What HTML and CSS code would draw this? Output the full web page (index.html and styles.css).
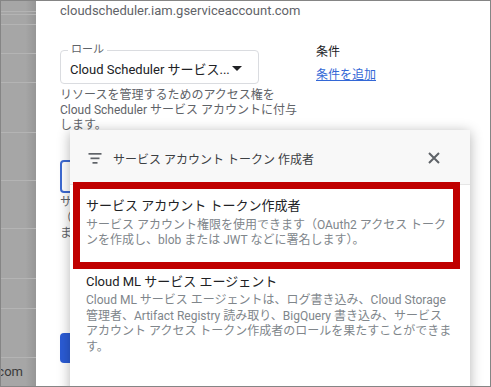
FILE: index.html
```html
<!DOCTYPE html>
<html lang="ja">
<head>
    <meta charset="UTF-8">
    <meta name="viewport" content="width=device-width, initial-scale=1.0">
    <title>ロールを選択</title>
    <link rel="stylesheet" href="styles.css">
</head>
<body>

<div id="frame">
    <!-- dimmed page behind the side panel -->
    <div class="backdrop">
        <div class="row" style="height: 10px;"></div>
        <div class="row" style="height: 2px;"></div>
        <div class="row" style="height: 9px;"></div>
        <div class="row" style="height: 28px;"></div>
        <div class="row" style="height: 28px;"></div>
        <div class="row" style="height: 49px;"></div>
        <div class="row" style="height: 47px;"></div>
        <div class="row" style="height: 47px;"></div>
        <div class="row" style="height: 49px;"></div>
        <div class="row" style="height: 29px;"></div>
        <div class="row" style="height: 48px;"></div>
        <div class="row last"><span>gserviceaccount.com</span></div>
    </div>

    <div class="panel">
        <div class="account">cloudscheduler.iam.gserviceaccount.com</div>

        <div class="role-row">
            <div class="role-col">
                <div class="select-box">
                    <span class="select-label">ロール</span>
                    <span class="select-value">Cloud Scheduler サービス...</span>
                    <svg class="arrow" width="10" height="5" viewBox="0 0 10 5"><path d="M0 0h10L5 5z" fill="#202124"/></svg>
                </div>
                <p class="help">リソースを管理するためのアクセス権を<br>Cloud Scheduler サービス アカウントに付与<br>します。</p>
            </div>
            <div class="cond-col">
                <div class="cond-title">条件</div>
                <a class="cond-link" href="#">条件を追加</a>
            </div>
        </div>

        <div class="outline-btn">別のロールを追加</div>
        <div class="hidden-wrap">
            <p class="hidden-text">サービス アカウントのユーザー ロール<br>（省略可）<br>ます。</p>
        </div>
        <div class="fill-btn">保存</div>

        <!-- role picker menu -->
        <div class="menu">
            <div class="menu-head">
                <svg class="filter-icon" width="14" height="11" viewBox="0 0 14 11">
                    <rect x="0.5" y="0" width="13" height="1.7" fill="#5f6368"/>
                    <rect x="2.5" y="4.5" width="9" height="1.7" fill="#5f6368"/>
                    <rect x="4.5" y="9" width="5" height="1.7" fill="#5f6368"/>
                </svg>
                <span class="menu-query">サービス アカウント トークン 作成者</span>
                <svg class="close-icon" width="12" height="12" viewBox="0 0 12 12">
                    <path d="M1 1L11 11M11 1L1 11" stroke="#5f6368" stroke-width="2"/>
                </svg>
            </div>

            <div class="option picked">
                <div class="option-title">サービス アカウント トークン作成者</div>
                <div class="option-desc">サービス アカウント権限を使用できます（OAuth2 アクセス トーク<br>ンを作成し、blob または JWT などに署名します）。</div>
            </div>

            <div class="option">
                <div class="option-title">Cloud ML サービス エージェント</div>
                <div class="option-desc">Cloud ML サービス エージェントは、ログ書き込み、Cloud Storage<br>管理者、Artifact Registry 読み取り、BigQuery 書き込み、サービス<br>アカウント アクセス トークン作成者のロールを果たすことができま<br>す。</div>
            </div>
        </div>
    </div>
</div>

</body>
</html>
```

FILE: styles.css
```css
body {
    margin: 0;
    font-family: Roboto, "Noto Sans CJK JP", sans-serif;
    background-color: #ffffff;
}

#frame {
    width: 491px;
    height: 387px;
    box-sizing: border-box;
    border: 1px solid #858585;
    display: flex;
    overflow: hidden;
}

.backdrop {
    width: 35px;
    flex-shrink: 0;
    display: flex;
    flex-direction: column;
    background: linear-gradient(to right, #a6a6a6 70%, #969696);
}

.backdrop .row {
    border-bottom: 1px solid #b4b4b4;
}

.backdrop .last {
    border-bottom: none;
    flex: 1;
    display: flex;
    justify-content: flex-end;
    align-items: flex-end;
    padding-right: 13px;
    padding-bottom: 7px;
    overflow: hidden;
}

.backdrop .last span {
    font-size: 13px;
    color: #3a3a3a;
    white-space: nowrap;
}

.panel {
    position: relative;
    flex: 1;
    background-color: #ffffff;
    padding: 2px 0 0 24px;
}

.account {
    font-size: 13px;
    line-height: 16px;
    color: #5f6368;
    white-space: nowrap;
}

.role-row {
    display: flex;
    margin-top: 25px;
}

.role-col {
    width: 240px;
    padding-top: 6px;
}

.select-box {
    position: relative;
    width: 199px;
    height: 34px;
    box-sizing: border-box;
    border: 1px solid #dadce0;
    border-radius: 4px;
    display: flex;
    align-items: center;
    padding: 0 16px 0 9px;
}

.select-label {
    position: absolute;
    top: -8px;
    left: 7px;
    padding: 0 3px;
    background-color: #ffffff;
    font-size: 11px;
    line-height: 14px;
    color: #5f6368;
}

.select-value {
    flex: 1;
    font-size: 13px;
    color: #202124;
    white-space: nowrap;
    padding-top: 2px;
}

.arrow {
    margin-top: 2px;
}

.help {
    margin: 4px 0 0;
    font-size: 12px;
    line-height: 15px;
    color: #5f6368;
    white-space: nowrap;
}

.cond-col {
    margin-left: 16px;
}

.cond-title {
    font-size: 12px;
    line-height: 16px;
    color: #202124;
}

.cond-link {
    display: inline-block;
    margin-top: 7px;
    font-size: 12px;
    line-height: 16px;
    color: #3367d6;
}

.outline-btn {
    margin-top: 27px;
    width: 150px;
    height: 33px;
    box-sizing: border-box;
    border: 2px solid #3d6ad2;
    border-radius: 4px;
    display: flex;
    align-items: center;
    justify-content: center;
    padding-left: 20px;
    font-size: 13px;
    color: #3d6ad2;
    white-space: nowrap;
}

.hidden-wrap {
    width: 12px;
    overflow: hidden;
}

.hidden-text {
    margin: 2px 0 0;
    font-size: 12px;
    line-height: 15.5px;
    color: #5f6368;
    white-space: nowrap;
}

.fill-btn {
    margin-top: 91px;
    width: 100px;
    height: 30px;
    border-radius: 4px;
    background-color: #2b5cd6;
    display: flex;
    align-items: center;
    justify-content: center;
    padding-left: 20px;
    box-sizing: border-box;
    color: #ffffff;
    font-size: 13px;
}

.menu {
    position: absolute;
    left: 34px;
    top: 129px;
    width: 400px;
    bottom: -20px;
    background-color: #ffffff;
    box-shadow: 0 2px 12px rgba(0, 0, 0, 0.3);
}

.menu-head {
    height: 55px;
    box-sizing: border-box;
    background-color: #f8f8f8;
    border-bottom: 1px solid #e6e6e6;
    display: flex;
    align-items: center;
    padding: 2px 30px 0 18px;
}

.menu-query {
    flex: 1;
    margin-left: 11px;
    font-size: 12px;
    color: #3c4043;
    white-space: nowrap;
}

.option {
    padding: 4px 16px 0;
}

.option.picked {
    margin: -3px 10px 0 3px;
    padding: 8px 6px 14px;
    border: 7px solid #c00000;
}

.option-title {
    font-size: 13px;
    line-height: 18px;
    color: #202124;
    white-space: nowrap;
}

.option-desc {
    margin-top: 2px;
    font-size: 12px;
    line-height: 15.5px;
    color: #80868b;
    white-space: nowrap;
}

.option.picked .option-desc {
    margin-top: 3px;
    line-height: 15px;
}
```
